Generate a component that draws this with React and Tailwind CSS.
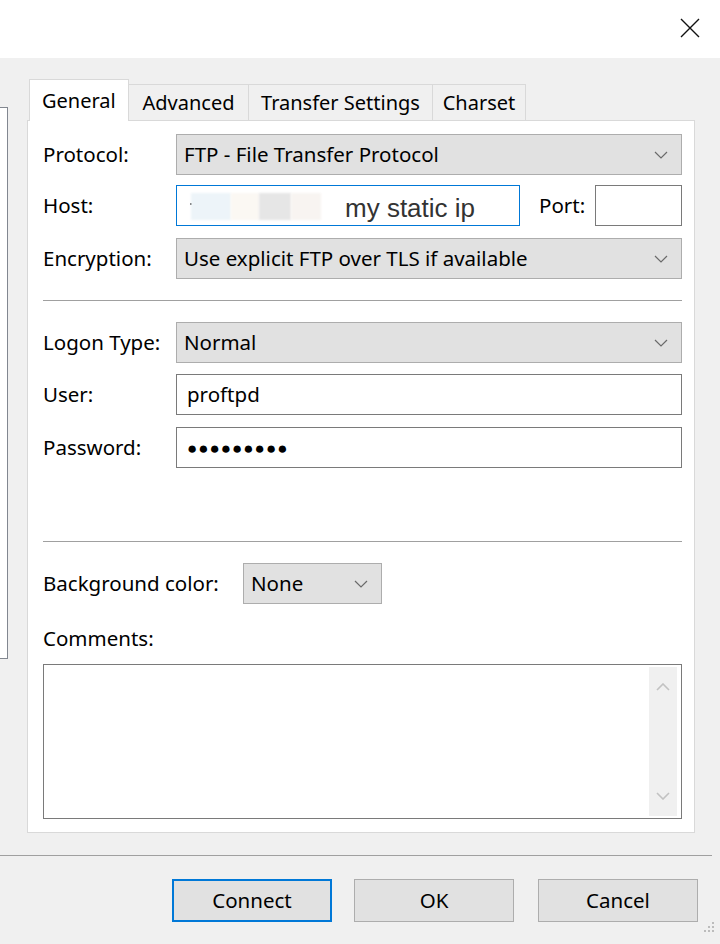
import React from 'react';

const FONT = { fontFamily: '"Noto Sans", "Open Sans", sans-serif' };

function Chevron({ className = '' }) {
  return (
    <svg width="14" height="8" viewBox="0 0 14 8" className={className}>
      <polyline points="1,1 7,7 13,1" fill="none" stroke="#6a6a6a" strokeWidth="1.2" />
    </svg>
  );
}

function Select({ value, className = '' }) {
  return (
    <div className={`h-[41px] bg-[#e1e1e1] border border-[#adadad] flex items-center justify-between pl-[7px] pr-[13px] ${className}`}>
      <span className="text-[20.5px] leading-none">{value}</span>
      <Chevron />
    </div>
  );
}

function Field({ children, className = '' }) {
  return (
    <div className={`h-[41px] bg-white border border-[#7a7a7a] flex items-center pl-[10px] ${className}`}>
      {children}
    </div>
  );
}

function Row({ label, children, className = '' }) {
  return (
    <div className={`flex items-center ${className}`}>
      <div className="w-[133px] shrink-0 text-[20.5px] whitespace-nowrap">{label}</div>
      {children}
    </div>
  );
}

function Button({ label, primary }) {
  return (
    <button
      className={`h-[43px] w-[160px] bg-[#e1e1e1] text-[20.5px] ${
        primary ? 'border-2 border-[#0078d7]' : 'border border-[#adadad]'
      }`}
    >
      {label}
    </button>
  );
}

export default function App() {
  const tabs = ['Advanced', 'Transfer Settings', 'Charset'];
  const tabWidths = ['w-[120px]', 'w-[184px]', 'w-[93px]'];

  return (
    <div className="w-[720px] h-[944px] bg-[#f0f0f0] text-black relative overflow-hidden" style={FONT}>
      {/* Title bar */}
      <div className="h-[58px] bg-white flex justify-end items-start pr-[20px] pt-[18px]">
        <svg width="20" height="20" viewBox="0 0 20 20">
          <path d="M1 1 L19 19 M19 1 L1 19" stroke="#111" strokeWidth="1.4" />
        </svg>
      </div>

      <div className="flex">
        {/* Site tree edge */}
        <div className="mt-[49px] w-[8px] h-[552px] bg-white border border-l-0 border-[#828790]" />

        <div className="ml-[19px] mt-[21px] w-[668px]">
          {/* Tabs */}
          <div className="flex items-end pl-[2px] relative z-10 -mb-px">
            <div className="h-[42px] w-[100px] bg-white border border-b-0 border-[#d9d9d9] flex items-center pl-[12px] text-[20px]">
              General
            </div>
            {tabs.map((t, i) => (
              <div
                key={t}
                className={`h-[37px] ${tabWidths[i]} bg-[#f0f0f0] border border-l-0 border-[#d9d9d9] flex items-center justify-center text-[20px]`}
              >
                {t}
              </div>
            ))}
          </div>

          {/* Panel */}
          <div className="h-[713px] bg-white border border-[#d9d9d9] pl-[15px] pr-[12px] pt-[13px]">
            <Row label="Protocol:">
              <Select value="FTP - File Transfer Protocol" className="flex-1" />
            </Row>

            <Row label="Host:" className="mt-[10px]">
              <div className="h-[41px] w-[344px] bg-white border border-[#0078d7] relative flex items-center">
                <div className="absolute left-[13px] top-[17px] w-[2px] h-[2px] bg-[#555]" />
                <div className="absolute left-[14px] top-[7px] h-[27px] w-[40px] bg-[#edf4f9] blur-[1px]" />
                <div className="absolute left-[54px] top-[7px] h-[27px] w-[28px] bg-[#fbf8f3] blur-[1px]" />
                <div className="absolute left-[82px] top-[7px] h-[27px] w-[32px] bg-[#e6e6e6] blur-[1px]" />
                <div className="absolute left-[114px] top-[7px] h-[27px] w-[30px] bg-[#f8f4f1] blur-[1px]" />
                <span
                  className="absolute left-[168px] top-[3px] text-[26px] text-[#333]"
                  style={{ fontFamily: '"Liberation Sans", Arial, sans-serif' }}
                >
                  my static ip
                </span>
              </div>
              <div className="ml-[19px] w-[56px] text-[20.5px]">Port:</div>
              <Field className="flex-1" />
            </Row>

            <Row label="Encryption:" className="mt-[12px]">
              <Select value="Use explicit FTP over TLS if available" className="flex-1" />
            </Row>

            <div className="mt-[21px] h-px bg-[#a0a0a0]" />

            <Row label="Logon Type:" className="mt-[21px]">
              <Select value="Normal" className="flex-1" />
            </Row>

            <Row label="User:" className="mt-[11px]">
              <Field className="flex-1">
                <span className="text-[20.5px]">proftpd</span>
              </Field>
            </Row>

            <Row label="Password:" className="mt-[12px]">
              <Field className="flex-1">
                <span className="text-[17px] tracking-[1px] font-bold">●●●●●●●●●</span>
              </Field>
            </Row>

            <div className="mt-[73px] h-px bg-[#a0a0a0]" />

            <div className="mt-[21px] flex items-center">
              <div className="w-[200px] text-[20.5px]">Background color:</div>
              <Select value="None" className="w-[139px]" />
            </div>

            <div className="mt-[21px] text-[20.5px] leading-[26px]">Comments:</div>

            <div className="mt-[13px] h-[155px] bg-white border border-[#7a7a7a] flex justify-end pr-[4px] py-[2px]">
              <div className="w-[28px] bg-[#f0f0f0] flex flex-col items-center justify-between py-[16px]">
                <svg width="14" height="8" viewBox="0 0 14 8">
                  <polyline points="1,7 7,1 13,7" fill="none" stroke="#c2c2c2" strokeWidth="1.6" />
                </svg>
                <svg width="14" height="8" viewBox="0 0 14 8">
                  <polyline points="1,1 7,7 13,1" fill="none" stroke="#c2c2c2" strokeWidth="1.6" />
                </svg>
              </div>
            </div>
          </div>
        </div>
      </div>

      {/* Bottom separator */}
      <div className="mt-[22px] w-[712px] h-px bg-[#a0a0a0]" />

      {/* Buttons */}
      <div className="mt-[23px] flex justify-end gap-[24px] pr-[22px]">
        <div className="mr-[-2px]">
          <Button label="Connect" primary />
        </div>
        <Button label="OK" />
        <Button label="Cancel" />
      </div>

      {/* Resize grip */}
      <svg width="14" height="14" viewBox="0 0 14 14" className="absolute right-[4px] bottom-[10px]">
        {[[10, 2], [10, 6], [6, 6], [10, 10], [6, 10], [2, 10]].map(([x, y], i) => (
          <rect key={i} x={x} y={y} width="2" height="2" fill="#bcbcbc" />
        ))}
      </svg>
    </div>
  );
}
